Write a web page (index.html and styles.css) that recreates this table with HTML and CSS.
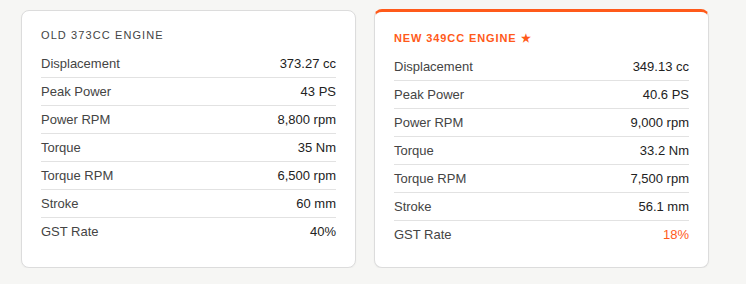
FILE: index.html
```html
<!DOCTYPE html>
<html>
<head>
<meta charset="utf-8">
<link rel="stylesheet" href="styles.css">
</head>
<body>
<div class="compare">
  <div class="card">
    <div class="card-title">Old 373cc Engine</div>
    <div class="row"><span class="label">Displacement</span><span class="value">373.27 cc</span></div>
    <div class="row"><span class="label">Peak Power</span><span class="value">43 PS</span></div>
    <div class="row"><span class="label">Power RPM</span><span class="value">8,800 rpm</span></div>
    <div class="row"><span class="label">Torque</span><span class="value">35 Nm</span></div>
    <div class="row"><span class="label">Torque RPM</span><span class="value">6,500 rpm</span></div>
    <div class="row"><span class="label">Stroke</span><span class="value">60 mm</span></div>
    <div class="row"><span class="label">GST Rate</span><span class="value">40%</span></div>
  </div>
  <div class="card card-new">
    <div class="card-title">New 349cc Engine ★</div>
    <div class="row"><span class="label">Displacement</span><span class="value">349.13 cc</span></div>
    <div class="row"><span class="label">Peak Power</span><span class="value">40.6 PS</span></div>
    <div class="row"><span class="label">Power RPM</span><span class="value">9,000 rpm</span></div>
    <div class="row"><span class="label">Torque</span><span class="value">33.2 Nm</span></div>
    <div class="row"><span class="label">Torque RPM</span><span class="value">7,500 rpm</span></div>
    <div class="row"><span class="label">Stroke</span><span class="value">56.1 mm</span></div>
    <div class="row"><span class="label">GST Rate</span><span class="value highlight">18%</span></div>
  </div>
</div>
</body>
</html>
```
FILE: styles.css
```css
html, body {
  margin: 0;
  padding: 0;
  background: #f6f6f4;
  font-family: "Liberation Sans", Arial, sans-serif;
}

.compare {
  display: flex;
  gap: 18px;
  padding: 9px 0 0 21px;
  height: 259px;
  box-sizing: content-box;
}

.card {
  width: 335px;
  box-sizing: border-box;
  background: #fff;
  border: 1px solid #dcdcdc;
  border-radius: 8px;
  padding: 18px 19px 0 19px;
  margin-top: 1px;
  box-shadow: 0 1px 2px rgba(0, 0, 0, 0.04);
}

.card-new {
  border-top: 3px solid #ff5a1a;
  margin-top: 0;
  padding-top: 20px;
}

.card-title {
  font-size: 11px;
  line-height: 13px;
  letter-spacing: 1.1px;
  text-transform: uppercase;
  color: #444;
  margin-bottom: 8px;
}

.card-new .card-title {
  color: #ff5a1a;
  font-weight: 700;
  letter-spacing: 0.9px;
}

.row {
  display: flex;
  justify-content: space-between;
  font-size: 13px;
  line-height: 17px;
  padding: 5px 0;
  border-bottom: 1px solid #e2e2e2;
}

.row:last-child {
  border-bottom: none;
}

.label {
  color: #444;
}

.value {
  color: #222;
}

.value.highlight {
  color: #ff5a1a;
}
```
